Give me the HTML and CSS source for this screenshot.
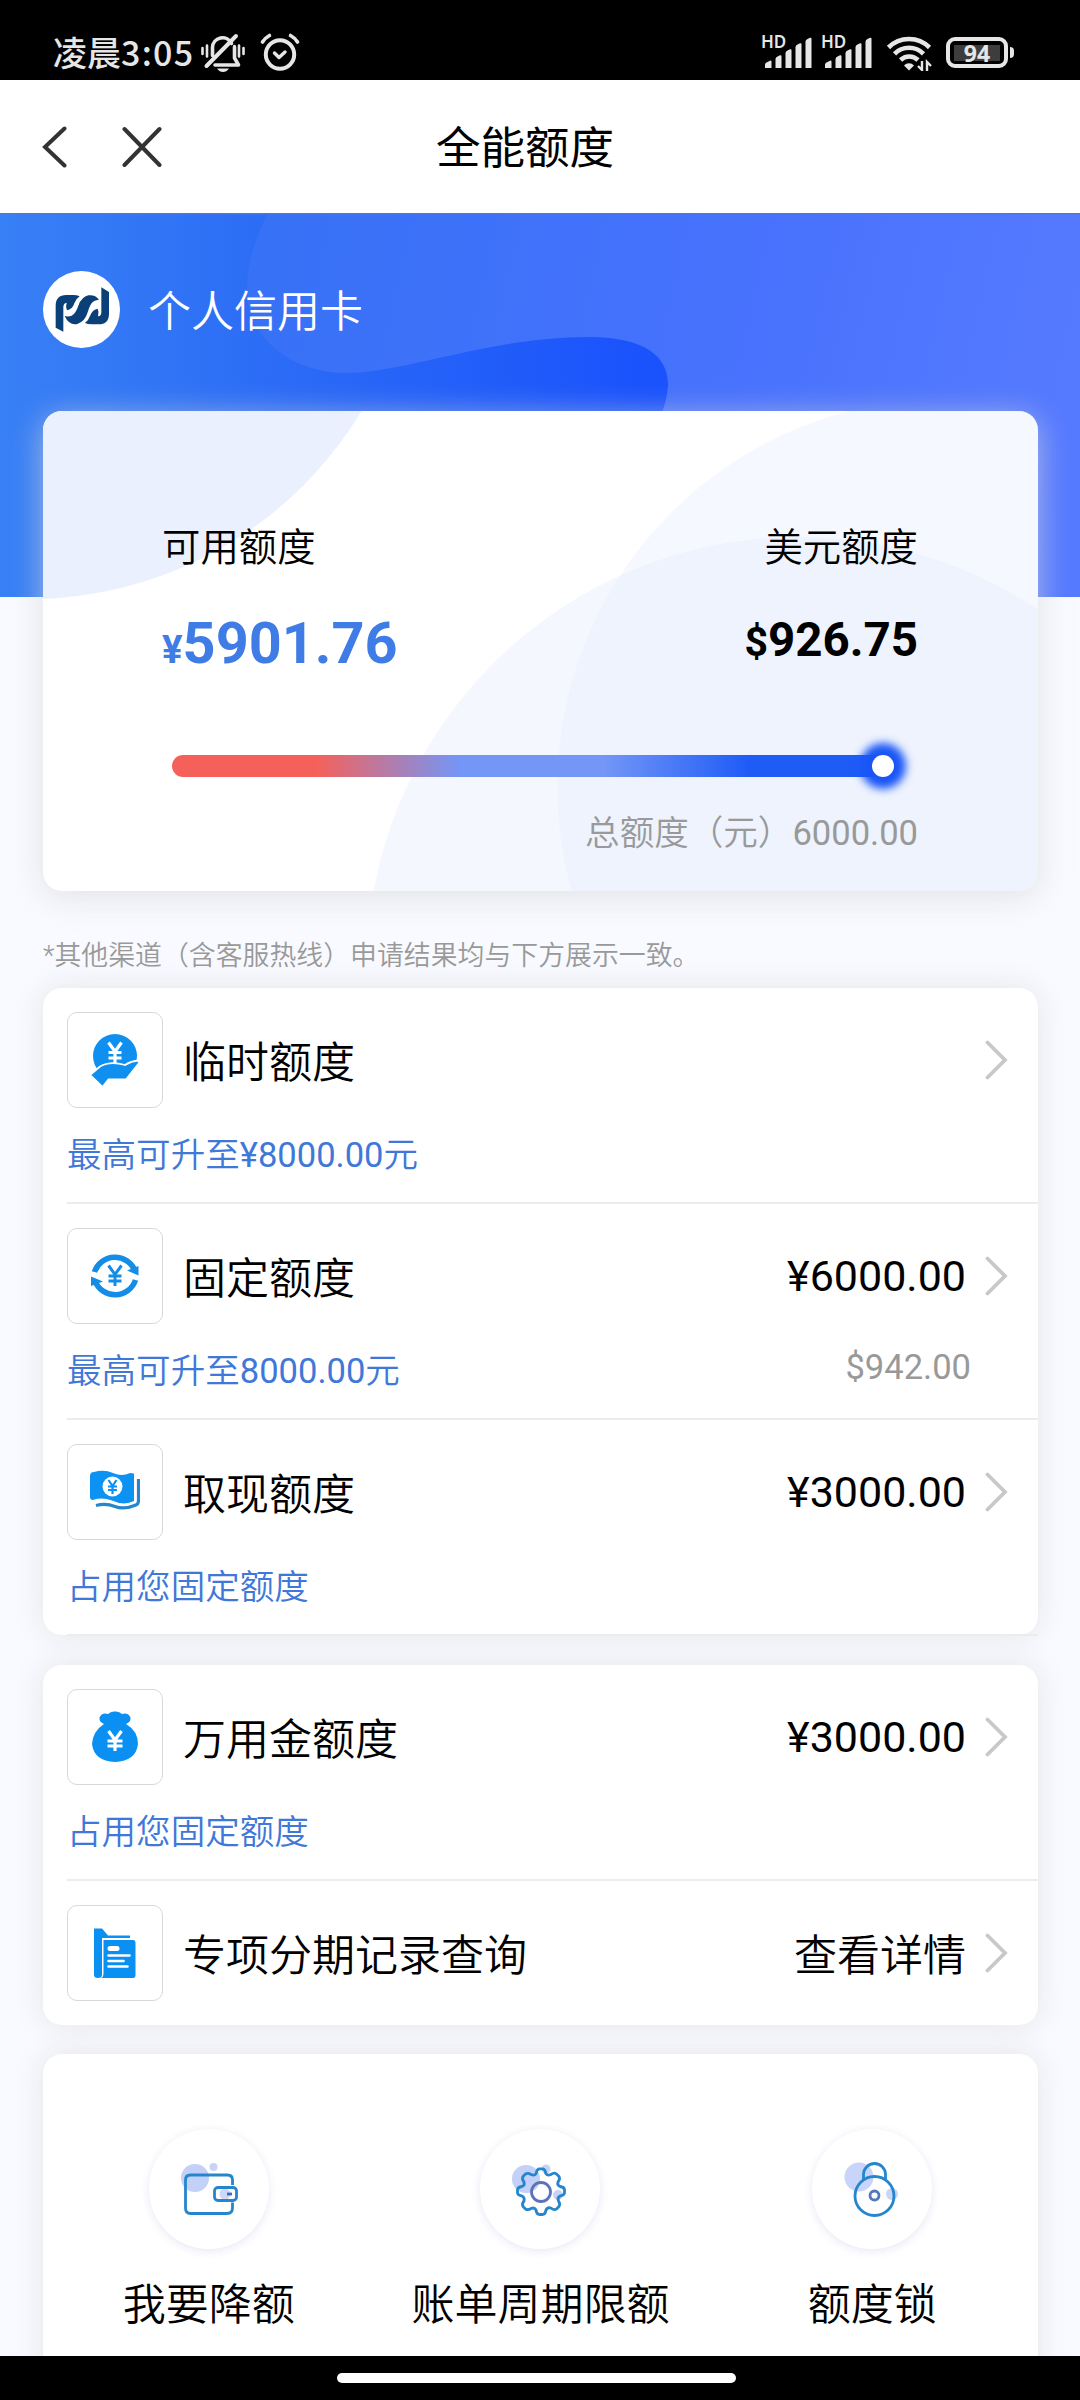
FILE: index.html
```html
<!DOCTYPE html>
<html lang="zh-CN">
<head>
<meta charset="utf-8">
<title>全能额度</title>
<link rel="stylesheet" href="styles.css">
</head>
<body>
<svg class="defs" width="0" height="0" aria-hidden="true">
  <symbol id="chevron" viewBox="0 0 24 40"><path d="M2.500 2.500 20 20 2.500 37.500" fill="none" stroke="#c8c8c8" stroke-width="3.800" stroke-linecap="round"/></symbol>
  <symbol id="signal" viewBox="0 0 49 32">
    <path d="M1 27.500a3 3 0 0 1 2-2.300l3-1.500q1.500-.5 1.500 1V31h-6.500zM11.500 22a3 3 0 0 1 2-2.500l2.500-1.200q1.500-.5 1.500 1V31h-6zM21.500 16a3 3 0 0 1 2-2.500l2.500-1.200q1.500-.5 1.500 1V31h-6zM31.500 10a3 3 0 0 1 2-2.500l2.500-1.200q1.500-.5 1.500 1V31h-6zM41.500 4.500a3 3 0 0 1 2-2.500l2.500-1.200q1.500-.5 1.500 1V31h-6z" fill="#e6e6e6"/>
  </symbol>
</svg>

<header class="status">
  <div class="status-left">
    <span class="clock">凌晨<span class="digits">3:05</span></span>
    <svg class="mute" width="46" height="40" viewBox="0 0 46 40" fill="none" stroke="#e6e6e6">
      <path d="M12.500 22.500V14.500a10 10 0 0 1 19-4M34.500 14v11l4 7H15" stroke-width="3.600" stroke-linejoin="round" stroke-linecap="round"/>
      <path d="M6.500 33 36 3" stroke-width="4" stroke-linecap="round"/>
      <path d="M2.500 15v6M7 12.500v11M39 12.500v11M43.500 15v6M34.500 13v12" stroke-width="2.600" stroke-linecap="round"/>
      <path d="M17 35.500h12q-2.500 3.500-6 3.500t-6-3.500z" fill="#e6e6e6" stroke="none"/>
    </svg>
    <svg class="alarm" width="40" height="38" viewBox="0 0 40 38" fill="none" stroke="#e6e6e6" stroke-linecap="round">
      <circle cx="20" cy="21.500" r="14.200" stroke-width="4"/>
      <path d="M14.500 20 19 24.500 25 19" stroke-width="3.400" stroke-linejoin="round"/>
      <path d="M2.500 9Q5 5 9.500 2.500M37.500 9Q35 5 30.500 2.500" stroke-width="3.600"/>
    </svg>
  </div>
  <div class="status-right">
    <div class="sim"><span class="hd">HD</span><svg width="49" height="32"><use href="#signal"/></svg></div>
    <div class="sim"><span class="hd">HD</span><svg width="49" height="32"><use href="#signal"/></svg></div>
    <svg class="wifi" width="47" height="36" viewBox="0 0 47 36" fill="none" stroke="#e6e6e6">
      <path d="M2.500 12.500a29 29 0 0 1 41 0M8.500 18.800a20.500 20.500 0 0 1 29 0M14.500 25a12.500 12.500 0 0 1 17.500 0" stroke-width="4.600" stroke-linecap="butt"/>
      <path d="M18 30.500a6.500 6.500 0 0 1 10 0L23 35.500z" fill="#e6e6e6" stroke="none"/>
      <path d="M36 26v9l-4-4M41 36v-9l4 4" stroke-width="2.400"/>
    </svg>
    <div class="battery"><span class="battery-level">94</span><i class="battery-tip"></i></div>
  </div>
</header>

<nav class="nav">
  <svg class="back" width="26" height="42" viewBox="0 0 26 42"><path d="M22.500 2.500 3 21l19.500 18.500" fill="none" stroke="#333" stroke-width="4" stroke-linecap="round"/></svg>
  <svg class="close" width="40" height="42" viewBox="0 0 40 42"><path d="m2.500 3 35 36M37.500 3l-35 36" fill="none" stroke="#333" stroke-width="4" stroke-linecap="round"/></svg>
  <h1 class="title">全能额度</h1>
</nav>

<main class="page">
  <section class="hero">
    <svg class="hero-art" width="1080" height="384" viewBox="0 213 1080 384">
      <defs>
        <linearGradient id="sea" x1="0" y1="0" x2="1" y2="0"><stop offset="0" stop-color="#3880f5"/><stop offset=".25" stop-color="#2c6cf6"/><stop offset=".6" stop-color="#1a52fc"/><stop offset="1" stop-color="#1650fe"/></linearGradient>
        <linearGradient id="wave" x1="248" y1="213" x2="1080" y2="400" gradientUnits="userSpaceOnUse"><stop offset="0" stop-color="#3671f6"/><stop offset=".6" stop-color="#4872fd"/><stop offset="1" stop-color="#567aff"/></linearGradient>
      </defs>
      <rect y="213" width="1080" height="384" fill="url(#sea)"/>
      <path d="M268 213C252 245 244 275 248 302C254 345 300 373 345 373C405 373 490 337 588 337C650 337 669 360 668 386Q667 400 661 415L640 597H1080V213Z" fill="url(#wave)"/>
      <rect y="213" width="1080" height="1.500" fill="#4a78dc"/>
    </svg>
    <div class="account">
      <svg class="logo" width="77" height="77" viewBox="20 19 231 231">
        <circle cx="135.500" cy="134.500" r="115.500" fill="#fff"/>
        <g fill="#0a3f78">
          <path d="M58 189 81 201V128Q81 115 91 114Q87 127 92 137Q108 135 114 116Q119 102 130 95Q122 91 110 91H90Q58 91 58 123Z"/>
          <path d="M218 82 195 68V143Q195 155 185 155Q189 142 184 132Q169 134 162 152Q157 167 146 175Q154 179 166 179H186Q218 179 218 147Z"/>
          <path d="M85 154Q96 157 106 153Q118 147 126 123Q136 96 156 92Q176 89 188 105Q172 106 164 118Q158 128 153 146Q145 171 123 178Q98 183 85 154Z"/>
        </g>
      </svg>
      <span class="account-name">个人信用卡</span>
    </div>
  </section>

  <section class="card limit">
    <svg class="limit-art" width="994" height="480" viewBox="44 411 994 480">
      <circle cx="30" cy="212" r="387" fill="#eaf0fe"/>
      <circle cx="799" cy="969" r="432" fill="#f4f7fe"/>
      <circle cx="946" cy="787" r="388" fill="#e2eafc" fill-opacity=".34"/>
    </svg>
    <div class="limit-cols">
      <div class="limit-col"><div class="limit-label">可用额度</div><div class="cny"><small>¥</small>5901.76</div></div>
      <div class="limit-col right"><div class="limit-label">美元额度</div><div class="usd"><small>$</small>926.75</div></div>
    </div>
    <div class="bar"><i class="knob"></i></div>
    <div class="total">总额度（元）<span class="num">6000.00</span></div>
  </section>

  <p class="note">*其他渠道（含客服热线）申请结果均与下方展示一致。</p>

  <section class="card list">
    <div class="row">
      <div class="row-main">
        <span class="icon"><svg width="50" height="56" viewBox="0 0 50 56">
          <circle cx="25" cy="24" r="22" fill="#0f8ff0"/>
          <path d="m18.500 10.500 6.500 9 6.500-9M25 19v12M18.500 20.500h13M18.500 26h13" stroke="#fff" stroke-width="3.200" fill="none"/>
          <path d="M0 43 10 34.500Q20 28.500 35 33Q41 29 49 28.500V31L36 47.500H18.500L12.500 55Z" fill="#0f8ff0" stroke="#fff" stroke-width="1.800"/>
        </svg></span>
        <span class="name">临时额度</span>
        <svg class="go" width="24" height="40"><use href="#chevron"/></svg>
      </div>
      <div class="row-sub"><span class="tip">最高可升至<span class="num">¥8000.00</span>元</span></div>
    </div>
    <div class="row">
      <div class="row-main">
        <span class="icon"><svg width="50" height="56" viewBox="0 0 50 56" fill="none" stroke="#148de6">
          <path d="M4.500 24A21.500 21.500 0 0 1 45 23M45.500 32A21.500 21.500 0 0 1 5 33" stroke-width="5.600"/>
          <path d="M48.500 18v9.500L37 22.500zM1 38V28.500L13 33.500z" fill="#148de6" stroke="none"/>
          <path d="m18.500 17.500 6.500 9 6.500-9M25 26v12M18.500 28h13M18.500 33h13" stroke-width="3"/>
        </svg></span>
        <span class="name">固定额度</span>
        <span class="amount num">¥6000.00</span>
        <svg class="go" width="24" height="40"><use href="#chevron"/></svg>
      </div>
      <div class="row-sub"><span class="tip">最高可升至<span class="num">8000.00</span>元</span><span class="usd-sub num">$942.00</span></div>
    </div>
    <div class="row">
      <div class="row-main">
        <span class="icon"><svg width="50" height="56" viewBox="0 0 50 56">
          <path d="M0 12Q0 8 4 8Q14 5 23 9T40 9L44 9.500V37Q34 42 22 36.500Q12 33 3 36Q0 36 0 33Z" fill="#0b92f2"/>
          <circle cx="22.500" cy="22.500" r="10" fill="#fff"/>
          <path d="m18.500 16 4 6 4-6M22.500 21v9M18 22.500h9M18 26h9" stroke="#0b92f2" stroke-width="2.200" fill="none"/>
          <path d="M6 41.500Q16 39 25 42.500T46 41Q48.500 40 48.500 37V15" fill="none" stroke="#2487cc" stroke-width="3.200"/>
        </svg></span>
        <span class="name">取现额度</span>
        <span class="amount num">¥3000.00</span>
        <svg class="go" width="24" height="40"><use href="#chevron"/></svg>
      </div>
      <div class="row-sub"><span class="tip">占用您固定额度</span></div>
    </div>
  </section>

  <section class="card list second">
    <div class="row">
      <div class="row-main">
        <span class="icon"><svg width="50" height="56" viewBox="0 0 50 56" fill="#0a90f3">
          <path d="M14 15Q9 13 9.500 8.500Q12 3 18 5Q21 2 25 2.500Q29 2 32 5Q38 3 40.500 8.500Q41 13 36 15Q48 22 48 35Q46 52 25 53Q4 52 2 35Q3 22 14 15Z"/>
          <path d="m18.500 22 6.500 9 6.500-9M25 30v12M17.500 32h15M17.500 37h15" fill="none" stroke="#fff" stroke-width="3.200"/>
        </svg></span>
        <span class="name">万用金额度</span>
        <span class="amount num">¥3000.00</span>
        <svg class="go" width="24" height="40"><use href="#chevron"/></svg>
      </div>
      <div class="row-sub"><span class="tip">占用您固定额度</span></div>
    </div>
    <div class="row">
      <div class="row-main">
        <span class="icon"><svg width="50" height="56" viewBox="0 0 50 56" fill="#0a90f3">
          <path d="M4 3.500H12L18 10.500H40V13H12V50Q12 53 8 53Q4 53 4 50Z"/>
          <path d="M13.500 15H43Q45.500 15 45.500 18V50Q45.500 53 43 53H11Q13.500 52 13.500 49Z"/>
          <path d="M20 23.500h7" stroke="#fff" stroke-width="5" stroke-linecap="round"/>
          <path d="M18.500 30.500h21M18.500 36h15M18.500 41.500h19" stroke="#fff" stroke-width="2.600" stroke-linecap="round"/>
        </svg></span>
        <span class="name">专项分期记录查询</span>
        <span class="amount detail">查看详情</span>
        <svg class="go" width="24" height="40"><use href="#chevron"/></svg>
      </div>
    </div>
  </section>

  <section class="card tools">
    <div class="tool">
      <span class="disc"><svg width="62" height="62" viewBox="0 0 62 62" fill="none" stroke="#2586cd" stroke-width="2.800">
        <circle cx="17" cy="20" r="14" fill="#c3d1f8" stroke="none"/><circle cx="35.500" cy="9" r="4" fill="#c9d3f7" stroke="none"/>
        <path d="M54.500 27V22Q54.500 17 49.500 17H12.500Q7.500 17 7.500 22V50Q7.500 55.500 12.500 55.500H49Q54.500 55.500 54.500 50V44.500"/>
        <circle cx="47" cy="36" r="5.500" fill="#cdd7fb" stroke="none"/>
        <rect x="36.500" y="29.500" width="22" height="13" rx="3.500"/><path d="M49 36h5" stroke="#4467b9"/>
      </svg></span>
      <span class="tool-name">我要降额</span>
    </div>
    <div class="tool">
      <span class="disc"><svg width="62" height="62" viewBox="0 0 62 62" fill="none" stroke="#2586cd" stroke-width="2.800" stroke-linejoin="round">
        <circle cx="17" cy="21" r="14" fill="#c3d1f8" stroke="none"/><circle cx="37" cy="11" r="4.500" fill="#c9d3f7" stroke="none"/><circle cx="49" cy="37" r="5" fill="#c9d3f7" stroke="none"/>
        <path d="M27.200 15.500Q27.600 11.500 30 10.800H34Q36.400 11.500 36.800 15.500Q38.500 18 42 16.500Q45 14 47.500 16L50 18.500Q51.500 21 49 24Q48 27.500 51 28.500Q55 29 55.500 31.500V35Q55 37.500 51 38Q48 39.500 49.500 43Q51.500 46 50 48.500L47.500 51Q45 52.500 42 50Q38.500 49 37 52Q36.500 56 34 56.500H30Q27.500 56 27 52Q25.500 49 22 50.500Q19 52.500 16.500 51L14 48.500Q12.500 46 15 43Q16 39.500 13 38Q9 37.500 8.500 35V31.500Q9 29 13 28.500Q16 27.500 15 24Q12.500 21 14 18.500L16.500 16Q19 14.500 22 16.500Q25.500 18 27.200 15.500Z"/>
        <circle cx="32" cy="34" r="9.500" stroke="#5b72bd"/>
      </svg></span>
      <span class="tool-name">账单周期限额</span>
    </div>
    <div class="tool">
      <span class="disc"><svg width="62" height="62" viewBox="0 0 62 62" fill="none" stroke="#2586cd" stroke-width="2.800">
        <circle cx="18" cy="19" r="14.500" fill="#c8d4f9" stroke="none"/><circle cx="51" cy="36" r="6" fill="#c8d4f9" stroke="none"/>
        <circle cx="33.500" cy="38" r="19.500"/><path d="M22.500 21.500V16.500a11 11 0 0 1 22 0V21.500"/>
        <circle cx="33.500" cy="37.500" r="4.500" stroke="#5377bc"/>
      </svg></span>
      <span class="tool-name">额度锁</span>
    </div>
  </section>
</main>

<footer class="gesture"><i class="pill"></i></footer>
</body>
</html>
```
FILE: styles.css
```css
* { box-sizing: border-box; }

body {
  margin: 0;
  width: 1080px;
  height: 2400px;
  display: flex;
  flex-direction: column;
  overflow: hidden;
  background: #f8faff;
  color: #000;
  font-family: Roboto, "Noto Sans CJK SC", sans-serif;
  font-weight: 350;
}

svg { display: block; flex: none; }
.defs { position: absolute; }
.num { font-weight: 400; }

/* status bar */
.status {
  height: 80px;
  flex: none;
  display: flex;
  justify-content: space-between;
  background: #000;
  color: #e6e6e6;
}
.status-left { display: flex; padding: 32px 0 0 53px; }
.clock {
  width: 147px;
  font: 500 34px/40px "Noto Sans CJK SC", sans-serif;
  white-space: nowrap;
}
.digits { letter-spacing: 1.3px; }
.mute { margin-top: 1px; margin-right: 14px; }
.alarm { margin-top: 1px; }
.status-right { display: flex; align-items: flex-start; padding: 36px 72px 0 0; }
.sim { display: flex; position: relative; width: 60px; padding-left: 1px; }
.hd {
  position: absolute;
  left: -2px;
  top: -1px;
  font: 600 17px/14px "Noto Sans", sans-serif;
}
.sim svg { margin-top: 1px; }
.wifi { margin: -1px 13px 0 3px; }
.battery {
  position: relative;
  width: 62px;
  height: 31px;
  margin-top: 1px;
  padding: 4px;
  border: 4px solid #e6e6e6;
  border-radius: 9px;
}
.battery-level {
  display: block;
  height: 16px;
  background: #3d3d3d;
  font: 700 23px/17px "Noto Sans", sans-serif;
  text-align: center;
}
.battery-tip {
  position: absolute;
  right: -10px;
  top: 6px;
  width: 4px;
  height: 11px;
  border-radius: 0 4px 4px 0;
  background: #e6e6e6;
}

/* title bar */
.nav {
  height: 133px;
  flex: none;
  display: grid;
  grid-template-columns: 80px 250px 306px;
  align-items: center;
  padding-left: 42px;
  background: #fff;
}
.title {
  margin: 0;
  padding-top: 4px;
  font-size: 44.5px;
  font-weight: 400;
  line-height: 60px;
  text-align: center;
}

.page { flex: 1; min-height: 0; overflow: hidden; }

/* hero */
.hero { position: relative; height: 384px; }
.hero-art { position: absolute; left: 0; top: 0; }
.account {
  position: relative;
  display: flex;
  align-items: center;
  gap: 28px;
  padding: 58px 43px 0;
  color: #fff;
  font-size: 43px;
}
.account-name { padding-top: 4px; line-height: 60px; }

.card {
  width: 995px;
  margin-left: 43px;
  background: #fff;
  border-radius: 19px;
  box-shadow: 0 0 28px rgba(218, 218, 218, .65);
}

/* limit summary */
.limit {
  position: relative;
  height: 480px;
  margin-top: -186px;
  padding: 109px 120px 0 119px;
  box-shadow: 0 6px 32px rgba(216, 216, 216, .7);
}
.limit-art { position: absolute; left: 0; top: 0; width: 100%; border-radius: 19px; }
.limit-cols { position: relative; display: flex; justify-content: space-between; }
.right { text-align: right; }
.limit-label { font-size: 38.4px; line-height: 56px; }
.cny, .usd { font-weight: 700; line-height: 72px; margin-top: 32px; white-space: nowrap; }
.cny { font-size: 57.6px; color: #407ce6; }
.usd { font-size: 47.500px; margin-top: 28px; }
.cny small { font-size: 38.4px; }
.usd small { font-size: 41px; }
.bar {
  position: relative;
  width: 720px;
  height: 22px;
  margin: 69px 0 0 10px;
  border-radius: 11px;
  background: linear-gradient(90deg, #f5615a 20%, #7396f7 40%, #7396f7 60%, #1f5cf6 80%);
}
.knob {
  position: absolute;
  left: 700px;
  top: 0;
  width: 22px;
  height: 22px;
  border-radius: 50%;
  background: #fff;
  box-shadow: 0 0 8px 12px #1a56f6;
}
.total {
  position: relative;
  margin-top: 32px;
  font-size: 34.56px;
  line-height: 48px;
  text-align: right;
  color: #999;
}

.note {
  margin: 46px 0 0 43px;
  font-size: 26.88px;
  line-height: 38px;
  color: #999;
}

/* list rows */
.list { height: 647px; margin-top: 13px; }
.second { height: 360px; margin-top: 30px; }
.row { height: 216px; margin-left: 24px; padding-top: 24px; border-bottom: 2px solid #ececec; }
.second .row:last-child { height: 144px; border-bottom: 0; }
.row-main { height: 96px; display: flex; align-items: center; }
.icon {
  flex: none;
  width: 96px;
  height: 96px;
  display: flex;
  align-items: center;
  justify-content: center;
  border: 1px solid #d8d8d8;
  border-radius: 10px;
}
.name { flex: 1; margin-left: 20px; padding-top: 5px; font-size: 43px; line-height: 60px; }
.amount { font-size: 43px; line-height: 60px; }
.detail { padding-top: 5px; }
.go { margin: 0 29px 0 19px; }
.row-sub {
  display: flex;
  justify-content: space-between;
  padding: 23px 67px 0 0;
  font-size: 34.56px;
  line-height: 48px;
}
.tip { color: #3f78d8; }
.usd-sub { margin-top: -4px; color: #999; }

/* shortcuts */
.tools {
  height: 340px;
  margin-top: 29px;
  padding-top: 75px;
  display: grid;
  grid-template-columns: repeat(3, 1fr);
}
.tool { display: flex; flex-direction: column; align-items: center; }
.disc {
  width: 120px;
  height: 120px;
  display: flex;
  align-items: center;
  justify-content: center;
  border-radius: 50%;
  background: #fff;
  box-shadow: 0 2px 8px rgba(70, 70, 190, .13);
}
.tool-name { margin-top: 26px; font-size: 43px; line-height: 60px; }

/* gesture bar */
.gesture {
  height: 44px;
  flex: none;
  display: flex;
  justify-content: center;
  padding-top: 17px;
  background: #000;
}
.pill { width: 399px; height: 10px; margin-right: 7px; border-radius: 5px; background: #fff; }
```
